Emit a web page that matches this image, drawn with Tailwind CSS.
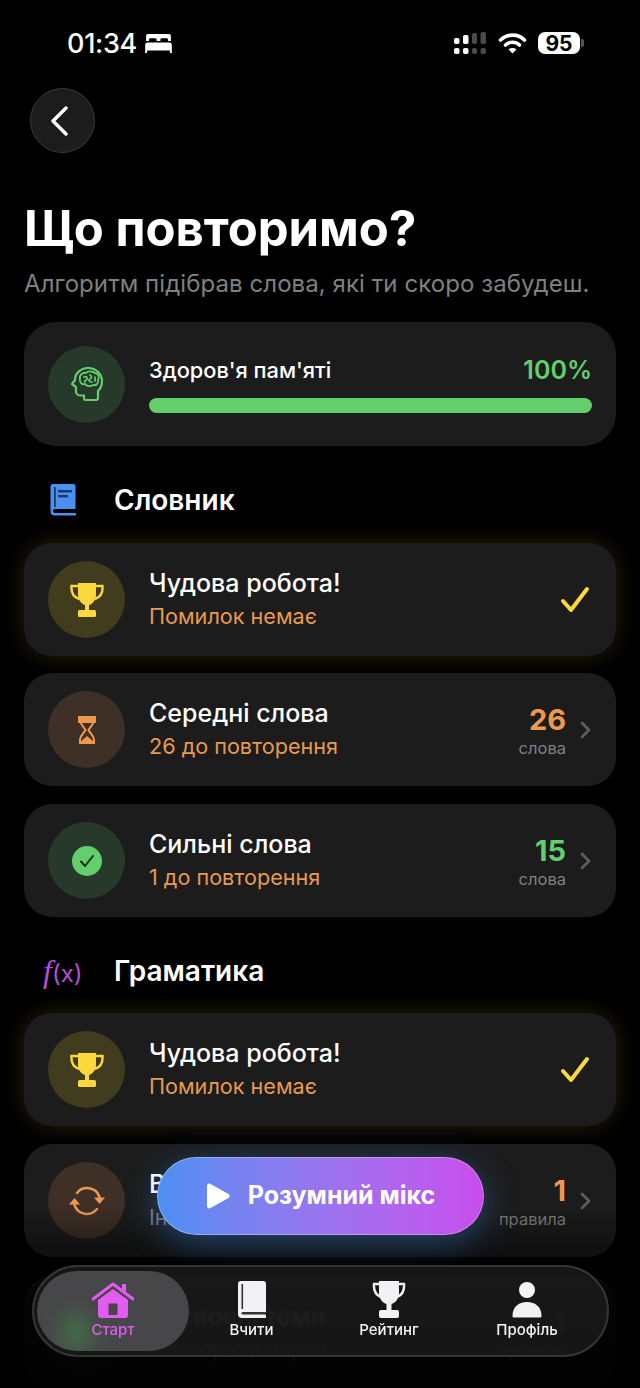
<!DOCTYPE html>
<html lang="uk">
<head>
    <meta charset="UTF-8">
    <meta name="viewport" content="width=device-width, initial-scale=1.0">
    <title>Що повторимо?</title>
    <script src="https://cdn.jsdelivr.net/npm/@tailwindcss/browser@4"></script>
</head>
<body class="bg-black">
<div class="relative w-[640px] h-[1388px] overflow-hidden bg-black text-white font-['Inter','Noto_Sans',sans-serif]">

    <!-- status bar -->
    <div class="h-[88px] pl-[67px] pr-[56px] pt-[27px] flex justify-between items-start">
        <div class="flex items-center gap-[8px] h-[32px]">
            <span class="text-[27px] leading-none font-medium tracking-[-0.3px]">01:34</span>
            <svg width="27" height="20" viewBox="0 0 28 21" fill="#fff">
                <path d="M3 1h22a2 2 0 0 1 2 2v5.500h-3V7a1.500 1.500 0 0 0-1.500-1.500h-5A1.500 1.500 0 0 0 16 7v1.500h-4V7a1.500 1.500 0 0 0-1.500-1.500h-5A1.500 1.500 0 0 0 4 7v1.500H1V3a2 2 0 0 1 2-2z"/>
                <path d="M2.500 10h23A2.500 2.500 0 0 1 28 12.500V21h-2v-2.500H2V21H0v-8.500A2.500 2.500 0 0 1 2.500 10z"/>
            </svg>
        </div>
        <div class="flex items-center h-[32px] gap-[11px]">
            <svg width="33" height="22" viewBox="0 0 33 22">
                <rect x="0" y="6" width="5.500" height="6" rx="1.800" fill="#fff"/>
                <rect x="0" y="16" width="5.500" height="6" rx="1.800" fill="#fff"/>
                <rect x="9" y="3" width="5.500" height="9" rx="1.800" fill="#fff"/>
                <rect x="9" y="16" width="5.500" height="6" rx="1.800" fill="#fff"/>
                <rect x="18" y="1" width="5" height="11" rx="1.800" fill="#4a4a4a"/>
                <rect x="18" y="16" width="5" height="6" rx="1.800" fill="#4a4a4a"/>
                <rect x="26.500" y="0" width="5.500" height="12" rx="1.800" fill="#4a4a4a"/>
                <rect x="26.500" y="16" width="5.500" height="6" rx="1.800" fill="#4a4a4a"/>
            </svg>
            <svg width="29" height="22" viewBox="0 0 29 22" fill="none" stroke="#fff" stroke-width="3.600" stroke-linecap="round">
                <path d="M2.500 8C9 1.500 20 1.500 26.500 8"/>
                <path d="M7.500 13c4-3.600 10-3.600 14 0"/>
                <path d="M14.500 21.500l-4-4.300c2.400-1.700 5.600-1.700 8 0z" fill="#fff" stroke="none"/>
            </svg>
            <div class="flex items-center">
                <div class="w-[42px] h-[22px] rounded-[7px] bg-white text-black text-[21px] leading-none font-bold flex items-center justify-center">95</div>
                <div class="w-[3px] h-[8px] rounded-r-[2px] bg-[#555] ml-[1px]"></div>
            </div>
        </div>
    </div>

    <!-- back button -->
    <div class="ml-[30px] w-[65px] h-[65px] rounded-full bg-[#1c1c1c] border border-[#3a3a3c] flex items-center justify-center">
        <svg width="20" height="30" viewBox="0 0 20 30" fill="none" stroke="#fff" stroke-width="3.400" stroke-linecap="round" stroke-linejoin="round" class="-ml-[5px]">
            <path d="M16 2 3 15l13 13"/>
        </svg>
    </div>

    <div class="px-[24px]">
        <h1 class="mt-[47px] text-[49px] leading-[58px] font-bold">Що повторимо?</h1>
        <p class="mt-[10px] text-[24px] leading-[32px] text-[#808080] tracking-[0.07px] whitespace-nowrap">Алгоритм підібрав слова, які ти скоро забудеш.</p>

        <!-- memory health -->
        <div class="mt-[22px] h-[124px] rounded-[32px] bg-[#1c1c1c] pl-[24px] pr-[24px] flex items-center gap-[24px]">
            <div class="w-[77px] h-[77px] shrink-0 rounded-full bg-[#27392a] flex items-center justify-center">
                <svg width="32" height="34" viewBox="0 0 32 34" fill="none" stroke="#62cf6c" stroke-width="2.200" stroke-linecap="round" stroke-linejoin="round">
                    <path d="M13 31v-2.500H9a4 4 0 0 1-4-4V20l-4-3 3-4C4 6 10 1 17 1c8 0 14 6 14 13 0 5-2 8-4 10v7a2 2 0 0 1-2 2H15a2 2 0 0 1-2-2z"/>
                    <path stroke-width="1.800" d="M9 12C8 8 12 5 15 6c2-2.500 7-2 9 0 3 0 5 4 3 7 1 3-2 6-5 5-3 2-7 1-8-1-3 1-6-2-5-5z"/>
                    <path stroke-width="1.700" d="M13 10c2-1 4 0 3 2s-3 1-2 3M19 8c2 1 2 3 0 4s-1 3 2 3M24 10v4"/>
                </svg>
            </div>
            <div class="flex-1">
                <div class="flex justify-between items-center h-[30px]">
                    <span class="text-[21.800px] font-medium">Здоров'я пам'яті</span>
                    <span class="text-[25px] font-semibold text-[#62cf6c]">100%</span>
                </div>
                <div class="mt-[12px] h-[15px] rounded-full bg-[#62cf6c]"></div>
            </div>
        </div>

        <!-- dictionary -->
        <div class="mt-[36px] h-[36px] flex items-center">
            <div class="w-[90px] pl-[26px]">
                <svg width="26" height="32" viewBox="0 0 26 32">
                    <path d="M3.500 0H23a2.500 2.500 0 0 1 2.500 2.500V25H5a1.500 1.500 0 0 0 0 4h21v2.500H4.500A4 4 0 0 1 0.500 27.500V3a3 3 0 0 1 3-3z" fill="#4a90f0"/>
                    <rect x="8" y="6" width="14" height="2.400" fill="#1a3a66"/>
                    <rect x="8" y="11" width="10" height="2.400" fill="#1a3a66"/>
                    <rect x="4" y="3" width="1.800" height="20" fill="#1a3a66"/>
                </svg>
            </div>
            <span class="text-[28px] font-semibold">Словник</span>
        </div>

        <!-- perfect card -->
        <div class="mt-[25px] h-[113px] rounded-[28px] bg-[#1c1c1c] shadow-[0_0_22px_rgba(250,215,60,0.16)] pl-[24px] pr-[26px] flex items-center gap-[24px]">
            <div class="w-[77px] h-[77px] shrink-0 rounded-full bg-[#423c1f] flex items-center justify-center">
                <svg width="34" height="36" viewBox="0 0 34 36" fill="#fbd83e">
                    <path d="M8 1h18v12c0 5-3.500 9-7 10v5h-4v-5c-3.500-1-7-5-7-10z"/>
                    <path d="M8 4H1.500C1 10 3 15 9 17" fill="none" stroke="#fbd83e" stroke-width="2.400"/>
                    <path d="M26 4h6.500C33 10 31 15 25 17" fill="none" stroke="#fbd83e" stroke-width="2.400"/>
                    <rect x="8" y="28" width="18" height="7" rx="1.500"/>
                </svg>
            </div>
            <div class="flex-1">
                <div class="text-[25px] leading-[33px] font-medium">Чудова робота!</div>
                <div class="text-[21.600px] leading-[32px] text-[#e89a4f]">Помилок немає</div>
            </div>
            <svg width="30" height="28" viewBox="0 0 30 28" fill="none" stroke="#fbd83e" stroke-width="4" stroke-linecap="round" stroke-linejoin="round">
                <path d="M3 15l8 9L27 3"/>
            </svg>
        </div>

        <!-- medium words -->
        <div class="mt-[17px] h-[113px] rounded-[28px] bg-[#1c1c1c] pl-[24px] pr-[24px] flex items-center gap-[24px]">
            <div class="w-[77px] h-[77px] shrink-0 rounded-full bg-[#3f3027] flex items-center justify-center">
                <svg width="18" height="28" viewBox="0 0 18 28" fill="#f0994e">
                    <path d="M2 1h14v3c0 4-4 7-5.500 10C12 17 16 20 16 24v3H2v-3c0-4 4-7 5.500-10C6 11 2 8 2 4z" fill="none" stroke="#f0994e" stroke-width="2"/>
                    <rect x="0" y="0" width="18" height="7" rx="1"/>
                    <path d="M1 27l8-7 8 7z"/>
                </svg>
            </div>
            <div class="flex-1">
                <div class="text-[25px] leading-[33px] font-medium">Середні слова</div>
                <div class="text-[21.600px] leading-[32px] text-[#e89a4f]">26 до повторення</div>
            </div>
            <div class="text-right pt-[4px]">
                <div class="text-[29px] leading-[32px] font-bold text-[#f0994e]">26</div>
                <div class="text-[16.500px] leading-[24px] text-[#808080]">слова</div>
            </div>
            <svg class="-ml-[10px]" width="12" height="20" viewBox="0 0 12 20" fill="none" stroke="#5e5e62" stroke-width="2.800" stroke-linecap="round" stroke-linejoin="round">
                <path d="M2 3l7 7-7 7"/>
            </svg>
        </div>

        <!-- strong words -->
        <div class="mt-[18px] h-[113px] rounded-[28px] bg-[#1c1c1c] pl-[24px] pr-[24px] flex items-center gap-[24px]">
            <div class="w-[77px] h-[77px] shrink-0 rounded-full bg-[#27392a] flex items-center justify-center">
                <svg width="30" height="30" viewBox="0 0 30 30">
                    <circle cx="15" cy="15" r="15" fill="#62cf6c"/>
                    <path d="M9 15.500l4 4.500 8-10" fill="none" stroke="#1c2b1e" stroke-width="2" stroke-linecap="round" stroke-linejoin="round"/>
                </svg>
            </div>
            <div class="flex-1">
                <div class="text-[25px] leading-[33px] font-medium">Сильні слова</div>
                <div class="text-[21.600px] leading-[32px] text-[#e89a4f]">1 до повторення</div>
            </div>
            <div class="text-right pt-[4px]">
                <div class="text-[29px] leading-[32px] font-bold text-[#62cf6c]">15</div>
                <div class="text-[16.500px] leading-[24px] text-[#808080]">слова</div>
            </div>
            <svg class="-ml-[10px]" width="12" height="20" viewBox="0 0 12 20" fill="none" stroke="#5e5e62" stroke-width="2.800" stroke-linecap="round" stroke-linejoin="round">
                <path d="M2 3l7 7-7 7"/>
            </svg>
        </div>

        <!-- grammar -->
        <div class="mt-[36px] h-[36px] flex items-center">
            <div class="w-[90px] pl-[19px] text-[#b84fdc] whitespace-nowrap flex items-baseline">
                <i class="text-[32px] leading-none font-['Liberation_Serif',serif]">f</i><span class="text-[24px] leading-none font-['Inter',sans-serif]">(x)</span>
            </div>
            <span class="text-[28px] font-semibold">Граматика</span>
        </div>

        <div class="mt-[24px] h-[113px] rounded-[28px] bg-[#1c1c1c] shadow-[0_0_22px_rgba(250,215,60,0.16)] pl-[24px] pr-[26px] flex items-center gap-[24px]">
            <div class="w-[77px] h-[77px] shrink-0 rounded-full bg-[#423c1f] flex items-center justify-center">
                <svg width="34" height="36" viewBox="0 0 34 36" fill="#fbd83e">
                    <path d="M8 1h18v12c0 5-3.500 9-7 10v5h-4v-5c-3.500-1-7-5-7-10z"/>
                    <path d="M8 4H1.500C1 10 3 15 9 17" fill="none" stroke="#fbd83e" stroke-width="2.400"/>
                    <path d="M26 4h6.500C33 10 31 15 25 17" fill="none" stroke="#fbd83e" stroke-width="2.400"/>
                    <rect x="8" y="28" width="18" height="7" rx="1.500"/>
                </svg>
            </div>
            <div class="flex-1">
                <div class="text-[25px] leading-[33px] font-medium">Чудова робота!</div>
                <div class="text-[21.600px] leading-[32px] text-[#e89a4f]">Помилок немає</div>
            </div>
            <svg width="30" height="28" viewBox="0 0 30 28" fill="none" stroke="#fbd83e" stroke-width="4" stroke-linecap="round" stroke-linejoin="round">
                <path d="M3 15l8 9L27 3"/>
            </svg>
        </div>

        <!-- rules in progress, sits under the mix button -->
        <div class="mt-[18px] h-[113px] rounded-[28px] bg-[#1c1c1c] pl-[24px] pr-[24px] flex items-center gap-[24px]">
            <div class="w-[77px] h-[77px] shrink-0 rounded-full bg-[#3f3027] flex items-center justify-center">
                <svg width="36" height="32" viewBox="0 0 36 32" fill="none" stroke="#f0994e" stroke-width="2.400" stroke-linecap="round">
                    <path d="M8 8A13 13 0 0 1 30.500 12"/>
                    <path d="M28 24A13 13 0 0 1 5.500 20"/>
                    <path d="M25 12.500h11L30.500 19z" fill="#f0994e" stroke="none"/>
                    <path d="M0 19.500h11L5.500 13z" fill="#f0994e" stroke="none"/>
                </svg>
            </div>
            <div class="flex-1">
                <div class="text-[25px] leading-[33px] font-medium">Вивчені</div>
                <div class="text-[21.600px] leading-[32px] text-[#808080]">Інші правила</div>
            </div>
            <div class="text-right pt-[4px]">
                <div class="text-[29px] leading-[32px] font-bold text-[#f0994e]">1</div>
                <div class="text-[16.500px] leading-[24px] text-[#808080]">правила</div>
            </div>
            <svg class="-ml-[10px]" width="12" height="20" viewBox="0 0 12 20" fill="none" stroke="#5e5e62" stroke-width="2.800" stroke-linecap="round" stroke-linejoin="round">
                <path d="M2 3l7 7-7 7"/>
            </svg>
        </div>

        <!-- mastered topics, mostly behind the tab bar -->
        <div class="mt-[19px] h-[113px] rounded-[28px] bg-[#1c1c1c] pl-[24px] pr-[24px] flex items-center gap-[24px]">
            <div class="w-[77px] h-[77px] shrink-0 rounded-full bg-[#27392a] flex items-center justify-center">
                <div class="w-[30px] h-[30px] rounded-full bg-[#62cf6c]"></div>
            </div>
            <div class="flex-1">
                <div class="text-[25px] leading-[33px] font-medium">Засвоєні теми</div>
                <div class="text-[21.600px] leading-[32px] text-[#808080]">Повторити зараз</div>
            </div>
            <div class="text-right pt-[4px]">
                <div class="text-[29px] leading-[32px] font-bold text-[#62cf6c]">1</div>
                <div class="text-[16.500px] leading-[24px] text-[#808080]">правила</div>
            </div>
            <div class="w-[2px]"></div>
        </div>
    </div>

    <!-- fade to black behind the floating controls -->
    <div class="absolute left-0 right-0 top-[1205px] bottom-0 bg-gradient-to-b from-black/0 via-black/85 via-50% to-black/92"></div>

    <!-- smart mix button -->
    <div class="absolute left-[157px] top-[1157px] w-[327px] h-[78px] rounded-full bg-gradient-to-r from-[#4a8ff2] to-[#c84cec] border border-white/30 shadow-[0_8px_34px_rgba(60,140,240,0.4)] flex items-center justify-center gap-[18px]">
        <svg width="24" height="26" viewBox="0 0 24 26" fill="#fff">
            <path d="M1 3c0-2 1.800-3 3.500-2l18 10c1.500 1 1.500 3 0 4l-18 10c-1.700 1-3.500 0-3.500-2z"/>
        </svg>
        <span class="text-[25px] font-bold">Розумний мікс</span>
    </div>

    <!-- tab bar -->
    <div class="absolute left-[32px] top-[1265px] w-[577px] h-[92px] rounded-full bg-[#202020]/70 backdrop-blur-[1px] border-2 border-[#333633] flex items-center px-[3px]">
        <div class="relative w-[152px] h-[80px] rounded-full bg-[#4a4a4c]/95 overflow-hidden flex flex-col items-center justify-center">
            <div class="absolute left-[24px] top-[42px] w-[30px] h-[40px] rounded-full bg-[#3f9a45]/45 blur-[10px]"></div>
            <svg class="relative" width="42" height="37" viewBox="0 0 42 37" fill="#e25cf2">
                <path d="M1 18 21 3l20 15" fill="none" stroke="#e25cf2" stroke-width="3" stroke-linecap="round" stroke-linejoin="round"/>
                <path d="M30 8V3h4v8z"/>
                <path fill-rule="evenodd" d="M6 19 21 8l15 11v15a3 3 0 0 1-3 3H9a3 3 0 0 1-3-3zM16.500 22.500v11.500h9V22.500z"/>
            </svg>
            <span class="relative text-[15px] leading-[24px] font-medium text-[#e25cf2]">Старт</span>
        </div>
        <div class="w-[125px] flex flex-col items-center">
            <svg width="30" height="37" viewBox="0 0 30 37">
                <path d="M4 0h22a3 3 0 0 1 3 3v27.500l-1.500 2 1.500 2V37H5a4 4 0 0 1-4-4V3a3 3 0 0 1 3-3z" fill="#f2f2f4"/>
                <rect x="4.500" y="3" width="1.600" height="25" fill="#333"/>
                <rect x="4.500" y="31" width="24" height="2.400" rx="1.200" fill="#333"/>
            </svg>
            <span class="text-[15px] leading-[24px] font-medium text-[#f2f2f4]">Вчити</span>
        </div>
        <div class="w-[150px] flex flex-col items-center">
            <svg width="34" height="37" viewBox="0 0 34 37" fill="#f2f2f4">
                <path d="M7 0h20v12c0 6-4 10-7.500 11v6h-5v-6C11 22 7 18 7 12z"/>
                <path d="M7 3H2c-.5 6 1.500 11 7 13M27 3h5c.5 6-1.500 11-7 13" fill="none" stroke="#f2f2f4" stroke-width="2.400"/>
                <rect x="7" y="29" width="20" height="8" rx="2"/>
            </svg>
            <span class="text-[15px] leading-[24px] font-medium text-[#f2f2f4]">Рейтинг</span>
        </div>
        <div class="w-[126px] flex flex-col items-center">
            <svg width="30" height="37" viewBox="0 0 30 37" fill="#f2f2f4">
                <circle cx="15" cy="9" r="8"/>
                <path d="M0.500 35c0-9 6-14 14.500-14s14.500 5 14.500 14c0 1-.5 1.500-1.500 1.500H2c-1 0-1.500-.5-1.500-1.500z"/>
            </svg>
            <span class="text-[15px] leading-[24px] font-medium text-[#f2f2f4]">Профіль</span>
        </div>
    </div>
</div>
</body>
</html>
